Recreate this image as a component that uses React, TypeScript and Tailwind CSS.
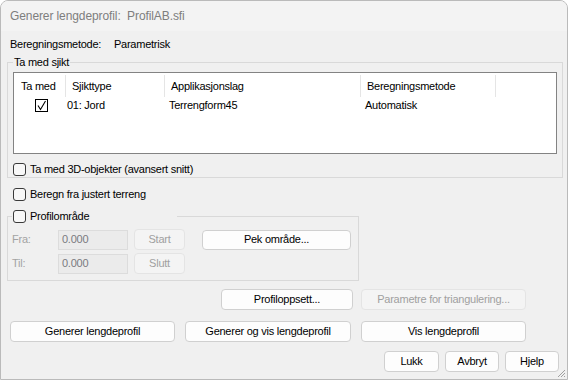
import React from "react";

const Btn = ({ children, w, h = "h-[21px]", disabled = false, cls = "" }: { children: React.ReactNode; w: string; h?: string; disabled?: boolean; cls?: string }) => (
  <div
    className={`${w} ${h} ${cls} flex items-center justify-center rounded-[4px] border ${
      disabled ? "border-[#e4e4e4] bg-[#f4f4f4] text-[#a0a0a0]" : "border-[#d0d0d0] bg-[#fdfdfd] text-black"
    }`}
  >
    {children}
  </div>
);

const Check = () => <div className="w-[13px] h-[13px] shrink-0 rounded-[3px] border border-[#3a3a3a] bg-[#f8f8f8]" />;

export default function App() {
  return (
    <div className="relative flex h-[380px] w-[568px] flex-col overflow-hidden rounded-t-[8px] border border-[#bababa] bg-[#f0f0f0] font-['Liberation_Sans',Arial,sans-serif] text-[11px] tracking-[-0.25px] text-black">
      <div className="flex h-[30px] shrink-0 items-center bg-[#f3f3f3] pl-[9px] text-[12px] tracking-[-0.1px] text-[#7e7e7e]">
        Generer lengdeprofil:&nbsp; ProfilAB.sfi
      </div>

      <div className="mt-[6px] flex h-[14px] items-center pl-[9px]">
        <span className="w-[104px]">Beregningsmetode:</span>
        <span>Parametrisk</span>
      </div>

      <fieldset className="ml-[6px] mt-[4px] w-[556px] border border-[#d9d9d9] px-[5px] pb-[1px]">
        <legend className="px-[1px] leading-[14px]">Ta med sjikt</legend>
        <div className="mt-[3px] h-[82px] w-full border border-[#838383] bg-white">
          <div className="flex pt-[2px]">
            <div className="flex h-[22px] w-[52px] items-center border-r border-[#e5e5e5] pl-[7px]">Ta med</div>
            <div className="flex h-[22px] w-[99px] items-center border-r border-[#e5e5e5] pl-[6px]">Sjikttype</div>
            <div className="flex h-[22px] w-[196px] items-center border-r border-[#e5e5e5] pl-[6px]">Applikasjonslag</div>
            <div className="flex h-[22px] w-[135px] items-center border-r border-[#e5e5e5] pl-[6px]">Beregningsmetode</div>
          </div>
          <div className="flex h-[16px] items-center">
            <div className="flex w-[52px] items-center pl-[21px]">
              <div className="flex h-[13px] w-[13px] items-center justify-center border border-black bg-white">
                <svg width="11" height="11" viewBox="0 0 11 11">
                  <path d="M2 5.5 L4.5 9.5 L9.5 1" fill="none" stroke="#000" strokeWidth="1.1" />
                </svg>
              </div>
            </div>
            <div className="w-[99px] pl-[1px]">01: Jord</div>
            <div className="w-[196px] pl-[4px]">Terrengform45</div>
            <div className="w-[135px] pl-[4px]">Automatisk</div>
          </div>
        </div>
        <div className="mt-[8px] flex h-[14px] items-center gap-[4px]">
          <Check />
          <span>Ta med 3D-objekter (avansert snitt)</span>
        </div>
      </fieldset>

      <div className="ml-[12px] mt-[9px] flex h-[14px] items-center gap-[4px]">
        <Check />
        <span>Beregn fra justert terreng</span>
      </div>

      <fieldset className="ml-[6px] mt-[8px] w-[352px] border border-[#d9d9d9] pl-[4px] pb-[6px]">
        <legend className="flex w-[165px] items-center gap-[4px] px-[1px] leading-[14px]">
          <Check />
          <span>Profilområde</span>
        </legend>
        <div className="mt-[6px] flex h-[21px] items-center">
          <span className="w-[46px] text-[#a3a3a3]">Fra:</span>
          <div className="flex h-[20px] w-[70px] items-center border border-[#dcdcdc] bg-[#ebebeb] pl-[3px] text-[#7a7a80]">0.000</div>
          <Btn w="w-[51px]" disabled cls="ml-[6px]">Start</Btn>
          <Btn w="w-[149px]" h="h-[20px]" cls="ml-[17px]">Pek område...</Btn>
        </div>
        <div className="mt-[3px] flex h-[21px] items-center">
          <span className="w-[46px] text-[#a3a3a3]">Til:</span>
          <div className="flex h-[20px] w-[70px] items-center border border-[#dcdcdc] bg-[#ebebeb] pl-[3px] text-[#7a7a80]">0.000</div>
          <Btn w="w-[51px]" disabled cls="ml-[6px]">Slutt</Btn>
        </div>
      </fieldset>

      <div className="ml-[220px] mt-[8px] flex gap-[8px]">
        <Btn w="w-[132px]">Profiloppsett...</Btn>
        <Btn w="w-[165px]" disabled>Parametre for triangulering...</Btn>
      </div>

      <div className="ml-[9px] mt-[11px] flex gap-[10px]">
        <Btn w="w-[165px]">Generer lengdeprofil</Btn>
        <Btn w="w-[166px]">Generer og vis lengdeprofil</Btn>
        <Btn w="w-[165px]">Vis lengdeprofil</Btn>
      </div>

      <div className="ml-[383px] mt-[9px] flex gap-[6px]">
        <Btn w="w-[55px]">Lukk</Btn>
        <Btn w="w-[54px]">Avbryt</Btn>
        <Btn w="w-[54px]">Hjelp</Btn>
      </div>

      <svg className="absolute bottom-[1px] right-[1px]" width="10" height="10" viewBox="0 0 10 10">
        <path d="M9 2 L2 9 M9 5 L5 9 M9 8 L8 9" stroke="#a0a0a0" strokeWidth="1" />
      </svg>
    </div>
  );
}
